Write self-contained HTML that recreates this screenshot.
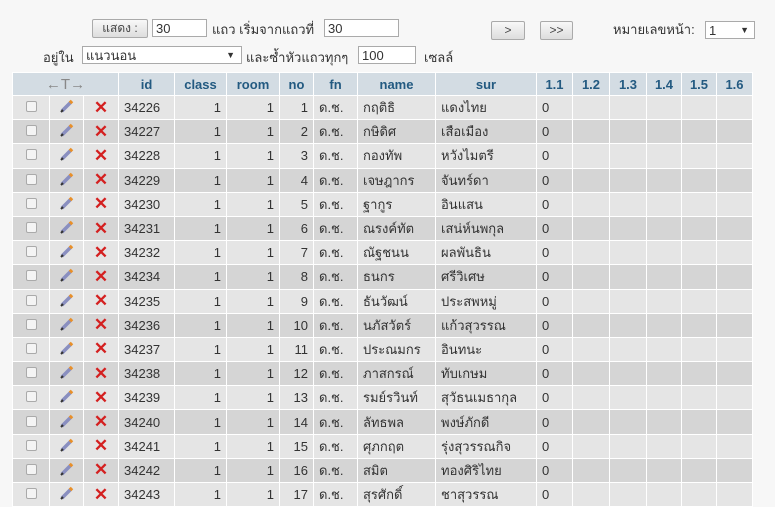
<!DOCTYPE html>
<html><head><meta charset="utf-8"><style>
body{margin:0;background:#f7f7f7;font-family:"Liberation Sans","Noto Sans CJK SC",sans-serif;font-size:13px;color:#333;width:775px;height:504px;overflow:hidden;position:relative}
.a{position:absolute}
.inp{position:absolute;background:#fff;border:1px solid #aaa;height:18px;font-size:13px;line-height:17px;padding-left:3px;box-sizing:border-box}
.btn{position:absolute;background:linear-gradient(#f8f8f8,#ddd);border:1px solid #aaa;border-radius:2px;height:19px;font-size:12px;line-height:17px;text-align:center;box-sizing:border-box;color:#444}
table{position:absolute;left:12px;top:72px;border-collapse:collapse;table-layout:fixed}
td,th{border:1px solid #fff;height:23.2px;padding:0 5px;white-space:nowrap;overflow:hidden;font-size:13px}
th{background:#d3dce3;color:#235a81;font-weight:bold;height:22px}
tbody tr:nth-child(odd) td{background:#e5e5e5}
tbody tr:nth-child(even) td{background:#d5d5d5}
.r{text-align:right}
.cb{display:inline-block;width:9px;height:9px;border:1px solid #aaa;border-radius:2px;background:#f4f4f4}
.x{color:#d42020;font-size:17px;font-weight:bold;line-height:10px}
</style></head><body>
<div class="btn" style="left:92px;top:19px;width:56px">แสดง :</div>
<div class="inp" style="left:152px;top:19px;width:55px">30</div>
<div class="a" style="left:212px;top:19px">แถว เริ่มจากแถวที่</div>
<div class="inp" style="left:324px;top:19px;width:75px">30</div>
<div class="btn" style="left:491px;top:21px;width:34px">&gt;</div>
<div class="btn" style="left:540px;top:21px;width:33px">&gt;&gt;</div>
<div class="a" style="left:613px;top:19px">หมายเลขหน้า:</div>
<div class="inp" style="left:705px;top:21px;width:50px">1<span style="position:absolute;right:5px;font-size:9px">▼</span></div>
<div class="a" style="left:43px;top:47px">อยู่ใน</div>
<div class="inp" style="left:82px;top:46px;width:160px">แนวนอน<span style="position:absolute;right:6px;font-size:9px">▼</span></div>
<div class="a" style="left:246px;top:47px">และซ้ำหัวแถวทุกๆ</div>
<div class="inp" style="left:358px;top:46px;width:58px">100</div>
<div class="a" style="left:424px;top:47px">เซลล์</div>
<table>
<colgroup><col style="width:37px"><col style="width:34px"><col style="width:35px"><col style="width:56px"><col style="width:52px"><col style="width:53px"><col style="width:34px"><col style="width:44px"><col style="width:78px"><col style="width:101px"><col style="width:36px"><col style="width:37px"><col style="width:37px"><col style="width:35px"><col style="width:35px"><col style="width:36px"></colgroup>
<thead><tr><th colspan="3" style="color:#888;font-weight:normal;font-size:15px">←T→</th><th>id</th><th>class</th><th>room</th><th>no</th><th>fn</th><th>name</th><th>sur</th><th>1.1</th><th>1.2</th><th>1.3</th><th>1.4</th><th>1.5</th><th>1.6</th></tr></thead>
<tbody id="b"></tbody>
</table>
<script>
var n=["กฤติธิ","กษิดิศ","กองทัพ","เจษฎากร","ฐากูร","ณรงค์ทัต","ณัฐชนน","ธนกร","ธันวัฒน์","นภัสวัตร์","ประณมกร","ภาสกรณ์","รมย์รวินท์","ลัทธพล","ศุภกฤต","สมิต","สุรศักดิ์"];
var s=["แดงไทย","เสือเมือง","หวังไมตรี","จันทร์ดา","อินแสน","เสน่ห์นพกุล","ผลพันธิน","ศรีวิเศษ","ประสพหมู่","แก้วสุวรรณ","อินทนะ","ทับเกษม","สุวัธนเมธากุล","พงษ์ภักดี","รุ่งสุวรรณกิจ","ทองศิริไทย","ชาสุวรรณ"];
var ids=[34226,34227,34228,34229,34230,34231,34232,34234,34235,34236,34237,34238,34239,34240,34241,34242,34243];
var h="";
for(var i=0;i<17;i++){h+='<tr><td style="text-align:center"><span class="cb"></span></td><td style="text-align:center"><svg width="16" height="16" viewBox="0 0 16 16"><path d="M3 13 L12 4" stroke="#8a8fc0" stroke-width="3.5"/><path d="M11 5 L13 3" stroke="#e8902a" stroke-width="3.5"/><path d="M2 14 L4 12" stroke="#333" stroke-width="2"/></svg></td><td style="text-align:center" class="x">✕</td><td>'+ids[i]+'</td><td class="r">1</td><td class="r">1</td><td class="r">'+(i+1)+'</td><td>ด.ช.</td><td>'+n[i]+'</td><td>'+s[i]+'</td><td>0</td><td></td><td></td><td></td><td></td><td></td></tr>';}
document.getElementById("b").innerHTML=h;
</script>
</body></html>
